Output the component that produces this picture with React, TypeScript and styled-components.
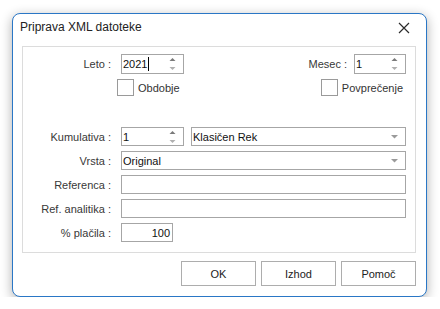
import styled, { createGlobalStyle } from "styled-components";

const GlobalStyle = createGlobalStyle`
  html, body {
    margin: 0;
    background: #ffffff;
  }
  body {
    font-family: "Liberation Sans", Arial, sans-serif;
    font-size: 11px;
    color: #333333;
  }
`;

const Page = styled.div`
  padding: 13px 0 0 12px;
`;

const Window = styled.div`
  box-sizing: border-box;
  width: 415px;
  height: 284px;
  border: 1px solid #2a77c6;
  border-radius: 8px;
  background: #ffffff;
  box-shadow: 0 3px 12px rgba(0, 0, 0, 0.32);
  display: flex;
  flex-direction: column;
`;

const TitleBar = styled.div`
  height: 32px;
  display: flex;
  align-items: flex-start;
  justify-content: space-between;
  padding: 6px 0 0 7px;
  box-sizing: border-box;
`;

const Title = styled.span`
  font-size: 12px;
  line-height: 14px;
  color: #222222;
`;

const CloseButton = styled.span`
  display: flex;
  width: 12px;
  height: 12px;
  margin: 2px 16px 0 0;
`;

const Panel = styled.div`
  margin: 0 10px 0 9px;
  border: 1px solid #dcdcdc;
  padding: 7px 9px 10px 0;
  display: flex;
  flex-direction: column;
`;

const TopArea = styled.div`
  display: flex;
  justify-content: space-between;
`;

const Group = styled.div<{ $align?: "start" | "end" }>`
  display: flex;
  flex-direction: column;
  align-items: ${(p) => (p.$align === "end" ? "flex-end" : "flex-start")};
  gap: 5px;
`;

const InlineRow = styled.div<{ $gap: number }>`
  display: flex;
  align-items: center;
  gap: ${(p) => p.$gap}px;
`;

const Label = styled.label<{ $width?: number }>`
  width: ${(p) => (p.$width ? `${p.$width}px` : "auto")};
  text-align: right;
  white-space: nowrap;
  color: #383838;
`;

const Field = styled.div<{ $width?: number; $height?: number; $align?: string }>`
  position: relative;
  box-sizing: border-box;
  width: ${(p) => (p.$width ? `${p.$width}px` : "auto")};
  flex: ${(p) => (p.$width ? "none" : "1")};
  height: ${(p) => p.$height ?? 19}px;
  border: 1px solid #a6a6a6;
  background: #ffffff;
  display: flex;
  align-items: center;
  justify-content: ${(p) => (p.$align === "right" ? "flex-end" : "flex-start")};
  padding: 0 2px 0 1px;
  color: #111111;
  white-space: nowrap;
`;

const Caret = styled.span`
  display: inline-block;
  width: 1px;
  height: 14px;
  background: #000000;
  margin-left: 1px;
`;

const FieldIcon = styled.span`
  position: absolute;
  right: 7px;
  top: 50%;
  transform: translateY(-50%);
  display: flex;
`;

const CheckRow = styled.div<{ $indent?: number }>`
  display: flex;
  align-items: center;
  gap: 4px;
  padding-left: ${(p) => p.$indent ?? 0}px;
  padding-right: ${(p) => (p.$indent ? 0 : 3)}px;
`;

const CheckBox = styled.span`
  box-sizing: border-box;
  width: 17px;
  height: 17px;
  border: 1px solid #9a9a9a;
  background: #ffffff;
`;

const FormGrid = styled.div`
  margin-top: 31px;
  display: grid;
  grid-template-columns: 88px 1fr;
  column-gap: 10px;
  row-gap: 5px;
  align-items: center;
`;

const Pair = styled.div`
  display: flex;
  gap: 7px;
`;

const ButtonBar = styled.div`
  display: flex;
  justify-content: flex-end;
  gap: 5px;
  margin: 8px 10px 0 0;
`;

const Button = styled.button`
  box-sizing: border-box;
  width: 75px;
  height: 25px;
  border: 1px solid #adadad;
  background: #ffffff;
  font-family: "Liberation Sans", Arial, sans-serif;
  font-size: 11px;
  color: #222222;
  padding: 0;
`;

function Spin() {
  return (
    <FieldIcon>
      <svg width="7" height="13" viewBox="0 0 7 13">
        <path d="M3.5 0.5 L6.5 3.5 L0.5 3.5 Z" fill="#7a7a7a" />
        <path d="M0.5 9.5 L6.5 9.5 L3.5 12.5 Z" fill="#b0b0b0" />
      </svg>
    </FieldIcon>
  );
}

function Drop() {
  return (
    <FieldIcon>
      <svg width="7" height="4" viewBox="0 0 7 4">
        <path d="M0 0 L7 0 L3.5 3.5 Z" fill="#9a9a9a" />
      </svg>
    </FieldIcon>
  );
}

export default function App() {
  return (
    <>
      <GlobalStyle />
      <Page>
        <Window>
          <TitleBar>
            <Title>Priprava XML datoteke</Title>
            <CloseButton>
              <svg width="12" height="12" viewBox="0 0 12 12">
                <path d="M1 1 L11 11 M11 1 L1 11" stroke="#2b2b2b" strokeWidth="1.2" />
              </svg>
            </CloseButton>
          </TitleBar>
          <Panel>
            <TopArea>
              <Group>
                <InlineRow $gap={10}>
                  <Label $width={88}>Leto :</Label>
                  <Field $width={63} $height={20}>
                    2021
                    <Caret />
                    <Spin />
                  </Field>
                </InlineRow>
                <CheckRow $indent={94}>
                  <CheckBox />
                  <span>Obdobje</span>
                </CheckRow>
              </Group>
              <Group $align="end">
                <InlineRow $gap={7}>
                  <Label>Mesec :</Label>
                  <Field $width={52} $height={20}>
                    1
                    <Spin />
                  </Field>
                </InlineRow>
                <CheckRow>
                  <CheckBox />
                  <span>Povprečenje</span>
                </CheckRow>
              </Group>
            </TopArea>
            <FormGrid>
              <Label $width={88}>Kumulativa :</Label>
              <Pair>
                <Field $width={63}>
                  1
                  <Spin />
                </Field>
                <Field>
                  Klasičen Rek
                  <Drop />
                </Field>
              </Pair>
              <Label $width={88}>Vrsta :</Label>
              <Field>
                Original
                <Drop />
              </Field>
              <Label $width={88}>Referenca :</Label>
              <Field />
              <Label $width={88}>Ref. analitika :</Label>
              <Field />
              <Label $width={88}>% plačila :</Label>
              <Field $width={52} $align="right">
                100
              </Field>
            </FormGrid>
          </Panel>
          <ButtonBar>
            <Button>OK</Button>
            <Button>Izhod</Button>
            <Button>Pomoč</Button>
          </ButtonBar>
        </Window>
      </Page>
    </>
  );
}
